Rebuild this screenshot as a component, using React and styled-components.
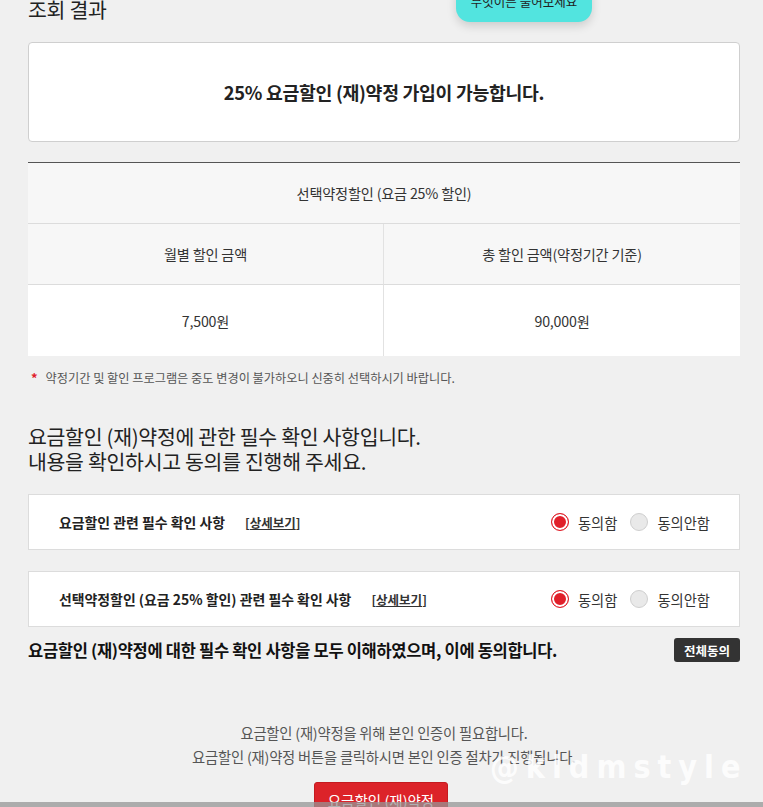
import React from "react";
import styled, { createGlobalStyle } from "styled-components";

const Global = createGlobalStyle`
  html, body { margin: 0; padding: 0; background: #f0f0f0; }
  body {
    font-family: "Noto Sans CJK KR", "Noto Sans", sans-serif;
    color: #222;
    overflow: hidden;
  }
`;

const Page = styled.div`
  position: relative;
  width: 763px;
  height: 807px;
  overflow: hidden;
  background: #f0f0f0;
`;

const Content = styled.div`
  display: flex;
  flex-direction: column;
  padding: 0 23px 0 28px;
`;

const Title = styled.h2`
  margin: -2px 0 0;
  font-size: 20.5px;
  font-weight: 400;
  line-height: 23px;
  color: #222;
  letter-spacing: -0.3px;
`;

const ResultBox = styled.div`
  margin-top: 21px;
  height: 98px;
  background: #fff;
  border: 1px solid #cfcfcf;
  border-radius: 4px;
  display: flex;
  align-items: center;
  justify-content: center;
  font-size: 18.3px;
  font-weight: 700;
  color: #222;
  letter-spacing: -0.3px;
`;

const Table = styled.div`
  margin-top: 20px;
  border-top: 1px solid #555;
  display: grid;
  grid-template-columns: 356px 1fr;
`;

const Cell = styled.div`
  grid-column: ${(p) => (p.$span ? "1 / span 2" : "auto")};
  height: ${(p) => p.$h}px;
  display: flex;
  align-items: center;
  justify-content: center;
  background: ${(p) => (p.$white ? "#fff" : "#f7f7f7")};
  border-bottom: ${(p) => (p.$last ? "none" : "1px solid #dcdcdc")};
  border-right: ${(p) => (p.$left ? "1px solid #e2e2e2" : "none")};
  font-size: 14.2px;
  color: #333;
  letter-spacing: -0.2px;
`;

const Note = styled.p`
  margin: 14px 0 0;
  display: flex;
  gap: 8px;
  align-items: center;
  line-height: 16px;
  font-size: 12.2px;
  color: #555;
  padding-left: 3px;
`;

const Star = styled.span`
  color: #e0202a;
  font-weight: 700;
  font-size: 13px;
`;

const Guide = styled.h3`
  margin: 38px 0 0;
  font-size: 20.5px;
  font-weight: 400;
  line-height: 25px;
  color: #222;
  letter-spacing: -0.3px;
`;

const AgreeList = styled.div`
  margin-top: 20px;
  display: flex;
  flex-direction: column;
  gap: 21px;
`;

const AgreeBox = styled.div`
  height: 54px;
  background: #fff;
  border: 1px solid #dcdcdc;
  display: flex;
  align-items: center;
  justify-content: space-between;
  padding: 0 29px 0 30px;
`;

const AgreeTitle = styled.div`
  display: flex;
  align-items: center;
  font-size: 13.9px;
  font-weight: 700;
  color: #222;
`;

const Detail = styled.a`
  margin-left: 20px;
  font-size: 12.5px;
  font-weight: 700;
  color: #333;
  text-decoration: none;
  span { text-decoration: underline; }
`;

const Radios = styled.div`
  display: flex;
  align-items: center;
  gap: 13px;
`;

const RadioLabel = styled.label`
  display: flex;
  align-items: center;
  gap: 9px;
  font-size: 14.3px;
  color: #333;
`;

const RadioDot = styled.span`
  width: 18px;
  height: 18px;
  border-radius: 50%;
  box-sizing: border-box;
  background: ${(p) => (p.$on ? "#e0202a" : "#e9e9e9")};
  border: 1px solid ${(p) => (p.$on ? "#e0202a" : "#cfcfcf")};
  box-shadow: ${(p) => (p.$on ? "inset 0 0 0 2px #fff" : "none")};
`;

const SummaryRow = styled.div`
  margin-top: 11px;
  display: flex;
  align-items: center;
  justify-content: space-between;
  height: 24px;
`;

const Summary = styled.p`
  margin: 0;
  font-size: 16.5px;
  font-weight: 700;
  color: #111;
  letter-spacing: -0.3px;
`;

const AllAgree = styled.button`
  height: 24px;
  padding: 0 10px;
  background: #333;
  color: #fff;
  border: none;
  border-radius: 3px;
  font-family: inherit;
  font-size: 12.5px;
  font-weight: 700;
`;

const AuthText = styled.p`
  margin: 59px 0 0;
  text-align: center;
  font-size: 14.3px;
  line-height: 24px;
  color: #555;
  letter-spacing: -0.2px;
`;

const ButtonWrap = styled.div`
  margin-top: 13px;
  display: flex;
  justify-content: center;
`;

const MainButton = styled.button`
  width: 134px;
  height: 36px;
  padding: 0;
  margin-left: -6px;
  background: #dc2329;
  color: #fff;
  border: 1px solid #c41b20;
  border-radius: 3px;
  font-family: inherit;
  font-size: 14.5px;
  font-weight: 400;
`;

const ChatBubble = styled.div`
  position: absolute;
  top: -20px;
  left: 456px;
  width: 136px;
  height: 42px;
  border-radius: 14px;
  background: #52e4df;
  box-shadow: 0 4px 10px rgba(0, 0, 0, 0.15);
  display: flex;
  align-items: center;
  justify-content: center;
  font-size: 12.5px;
  color: #222;
`;

const Watermark = styled.div`
  position: absolute;
  left: 490px;
  top: 748px;
  font-family: "DejaVu Sans Condensed", "DejaVu Sans", sans-serif;
  font-stretch: condensed;
  font-size: 32px;
  font-weight: 700;
  letter-spacing: 7px;
  color: rgba(255, 255, 255, 0.85);
  pointer-events: none;
`;

const BottomBar = styled.div`
  position: absolute;
  left: 0;
  right: 0;
  bottom: 0;
  height: 5px;
  background: rgba(150, 150, 150, 0.75);
`;

function Radio({ on, children }) {
  return (
    <RadioLabel>
      <RadioDot $on={on} />
      {children}
    </RadioLabel>
  );
}

function AgreeItem({ title }) {
  return (
    <AgreeBox>
      <AgreeTitle>
        {title}
        <Detail>
          [<span>상세보기</span>]
        </Detail>
      </AgreeTitle>
      <Radios>
        <Radio on>동의함</Radio>
        <Radio>동의안함</Radio>
      </Radios>
    </AgreeBox>
  );
}

export default function App() {
  return (
    <Page>
      <Global />
      <Content>
        <Title>조회 결과</Title>
        <ResultBox>25% 요금할인 (재)약정 가입이 가능합니다.</ResultBox>
        <Table>
          <Cell $span $h={60}>선택약정할인 (요금 25% 할인)</Cell>
          <Cell $left $h={60}>월별 할인 금액</Cell>
          <Cell $h={60}>총 할인 금액(약정기간 기준)</Cell>
          <Cell $left $white $last $h={71}>7,500원</Cell>
          <Cell $white $last $h={71}>90,000원</Cell>
        </Table>
        <Note>
          <Star>*</Star>
          약정기간 및 할인 프로그램은 중도 변경이 불가하오니 신중히 선택하시기 바랍니다.
        </Note>
        <Guide>
          요금할인 (재)약정에 관한 필수 확인 사항입니다.
          <br />
          내용을 확인하시고 동의를 진행해 주세요.
        </Guide>
        <AgreeList>
          <AgreeItem title="요금할인 관련 필수 확인 사항" />
          <AgreeItem title="선택약정할인 (요금 25% 할인) 관련 필수 확인 사항" />
        </AgreeList>
        <SummaryRow>
          <Summary>요금할인 (재)약정에 대한 필수 확인 사항을 모두 이해하였으며, 이에 동의합니다.</Summary>
          <AllAgree>전체동의</AllAgree>
        </SummaryRow>
        <AuthText>
          요금할인 (재)약정을 위해 본인 인증이 필요합니다.
          <br />
          요금할인 (재)약정 버튼을 클릭하시면 본인 인증 절차가 진행됩니다.
        </AuthText>
        <ButtonWrap>
          <MainButton>요금할인 (재)약정</MainButton>
        </ButtonWrap>
      </Content>
      <ChatBubble>무엇이든 물어보세요</ChatBubble>
      <Watermark>@kidmstyle</Watermark>
      <BottomBar />
    </Page>
  );
}
